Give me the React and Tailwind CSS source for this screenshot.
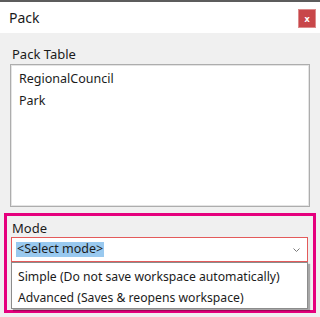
import React from 'react';

// small chevron used by the combo box
const Chevron = () => (
    <svg width="7" height="4" viewBox="0 0 7 4" className="block">
        <path d="M0.5 0.5 L3.5 3.5 L6.5 0.5" fill="none" stroke="#7a7a7a" strokeWidth="1" />
    </svg>
);

export default function App() {
    return (
        <div className="w-[320px] h-[317px] overflow-hidden bg-[#f0f0f0] text-[#1b1b1b] font-['Noto_Sans',sans-serif]">
            <div className="h-[2px] bg-[#5c5c5c]" />

            {/* title bar */}
            <div className="h-[31px] bg-white flex items-center justify-between pl-[9px] pr-[4px]">
                <span className="text-[14px] leading-none">Pack</span>
                <button className="w-[18px] h-[19px] mt-[2px] bg-[#c8474a] border border-[#dc8b8c] flex items-center justify-center text-white text-[9px] font-bold leading-none">
                    x
                </button>
            </div>

            {/* body */}
            <div className="px-[4px] pt-[13px]">
                <div className="pl-[8px] text-[13px] leading-[16px]">Pack Table</div>
                <div className="ml-[6px] mt-[2px] w-[300px] h-[143px] bg-white border border-[#adadad] shadow-[inset_0_0_0_1px_#e4e4e4] pt-[3px] pl-[8px] text-[12.5px]">
                    <div className="leading-[22px]">RegionalCouncil</div>
                    <div className="leading-[22px]">Park</div>
                </div>

                {/* highlighted mode group */}
                <div className="mt-[6px] w-[312px] h-[100px] border-[3px] border-[#e5007d] pt-[4px]">
                    <div className="pl-[5px] text-[13px] leading-[16px]">Mode</div>
                    <div className="ml-[4px] mt-[1px] w-[297px] h-[25px] bg-white border border-[#e35a5a] flex items-center justify-between pl-[4px] pr-[7px]">
                        <span className="bg-[#99c9ef] h-[15px] px-[1px] flex items-center text-[12.5px]">&lt;Select mode&gt;</span>
                        <Chevron />
                    </div>
                    <div className="ml-[4px] w-[297px] bg-white border border-[#8c8c8c] shadow-[2px_2px_1px_rgba(0,0,0,0.3)] pt-[3px] pl-[6px] text-[12.2px]">
                        <div className="leading-[21px]">Simple (Do not save workspace automatically)</div>
                        <div className="leading-[21px]">Advanced (Saves &amp; reopens workspace)</div>
                    </div>
                </div>
            </div>
        </div>
    );
}
